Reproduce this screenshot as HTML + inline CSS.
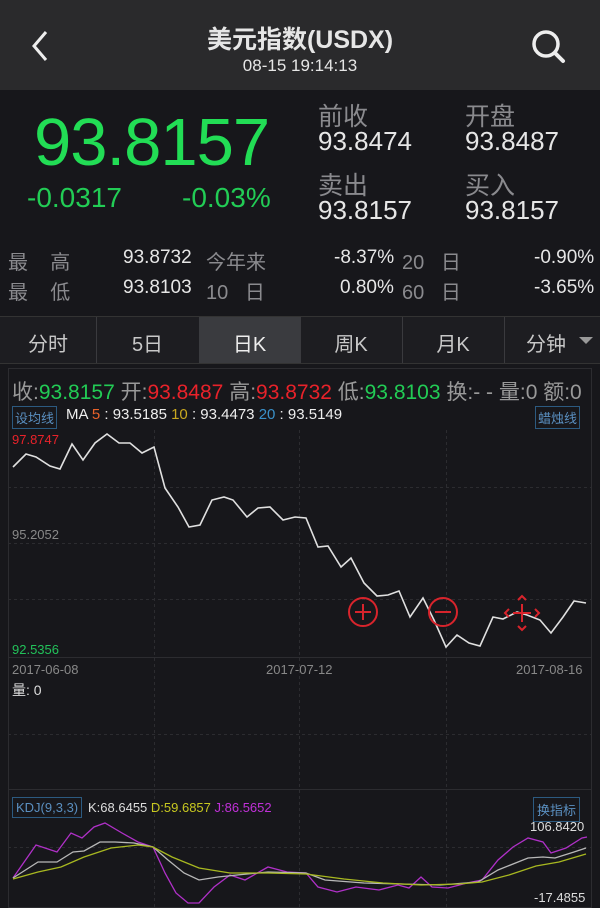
<!DOCTYPE html>
<html><head><meta charset="utf-8"><style>
*{margin:0;padding:0;box-sizing:border-box}
body{width:600px;height:908px;background:#17171b;font-family:"Liberation Sans","Noto Sans CJK SC",sans-serif;position:relative;overflow:hidden;color:#ddd}
.a{position:absolute;white-space:nowrap}
.g{color:#22cc55}.r{color:#e8222a}.gr{color:#8a8a8e}.w{color:#e6e6e6}
</style></head><body>
<div class="a" style="left:0;top:0;width:600px;height:90px;background:#2a2a2c"></div>
<svg class="a" style="left:28px;top:28px" width="24" height="36"><path d="M18 4 L6 18 L18 32" stroke="#eee" stroke-width="3" fill="none"/></svg>
<div class="a w" style="left:0;width:600px;text-align:center;top:20px;font-size:25px;font-weight:bold">美元指数(USDX)</div>
<div class="a w" style="left:0;width:600px;text-align:center;top:56px;font-size:17px">08-15 19:14:13</div>
<svg class="a" style="left:530px;top:28px" width="40" height="40"><circle cx="16" cy="16" r="12" stroke="#eee" stroke-width="3.5" fill="none"/><path d="M25 25 L33 33" stroke="#eee" stroke-width="4" stroke-linecap="round"/></svg>

<div class="a" style="left:34px;top:104px;font-size:67px;letter-spacing:-1px;color:#22dd55">93.8157</div>
<div class="a" style="left:27px;top:182px;font-size:28px;color:#22cc55">-0.0317</div>
<div class="a" style="left:182px;top:182px;font-size:28px;color:#22cc55">-0.03%</div>
<div class="a gr" style="left:318px;top:97px;font-size:25px">前收</div>
<div class="a w" style="left:318px;top:126px;font-size:26px">93.8474</div>
<div class="a gr" style="left:465px;top:97px;font-size:25px">开盘</div>
<div class="a w" style="left:465px;top:126px;font-size:26px">93.8487</div>
<div class="a gr" style="left:318px;top:166px;font-size:25px">卖出</div>
<div class="a w" style="left:318px;top:195px;font-size:26px">93.8157</div>
<div class="a gr" style="left:465px;top:166px;font-size:25px">买入</div>
<div class="a w" style="left:465px;top:195px;font-size:26px">93.8157</div>

<div class="a gr" style="left:8px;top:246px;font-size:20px">最&nbsp;&nbsp;&nbsp;&nbsp;高</div>
<div class="a w" style="left:123px;top:247px;font-size:19px">93.8732</div>
<div class="a gr" style="left:206px;top:246px;font-size:20px">今年来</div>
<div class="a w" style="left:334px;top:247px;font-size:19px">-8.37%</div>
<div class="a gr" style="left:402px;top:246px;font-size:20px">20&nbsp;&nbsp;&nbsp;日</div>
<div class="a w" style="left:534px;top:247px;font-size:19px">-0.90%</div>
<div class="a gr" style="left:8px;top:276px;font-size:20px">最&nbsp;&nbsp;&nbsp;&nbsp;低</div>
<div class="a w" style="left:123px;top:277px;font-size:19px">93.8103</div>
<div class="a gr" style="left:206px;top:276px;font-size:20px">10&nbsp;&nbsp;&nbsp;日</div>
<div class="a w" style="left:340px;top:277px;font-size:19px">0.80%</div>
<div class="a gr" style="left:402px;top:276px;font-size:20px">60&nbsp;&nbsp;&nbsp;日</div>
<div class="a w" style="left:534px;top:277px;font-size:19px">-3.65%</div>

<div class="a" style="left:0;top:316px;width:600px;height:48px;background:#1d1d21;border-top:1px solid #333;border-bottom:1px solid #333"></div>
<div class="a" style="left:199px;top:317px;width:101px;height:46px;background:#3a3b3f"></div>
<div class="a" style="left:96px;top:317px;width:1px;height:46px;background:#3a3a3e"></div>
<div class="a" style="left:402px;top:317px;width:1px;height:46px;background:#3a3a3e"></div>
<div class="a" style="left:504px;top:317px;width:1px;height:46px;background:#3a3a3e"></div>
<div class="a" style="left:300px;top:317px;width:1px;height:46px;background:#3a3a3e"></div>
<div class="a" style="left:0;width:96px;text-align:center;top:328px;font-size:20px;color:#c8c8c8">分时</div>
<div class="a" style="left:96px;width:103px;text-align:center;top:328px;font-size:20px;color:#c8c8c8">5日</div>
<div class="a" style="left:199px;width:101px;text-align:center;top:328px;font-size:20px;color:#eee">日K</div>
<div class="a" style="left:300px;width:102px;text-align:center;top:328px;font-size:20px;color:#c8c8c8">周K</div>
<div class="a" style="left:402px;width:102px;text-align:center;top:328px;font-size:20px;color:#c8c8c8">月K</div>
<div class="a" style="left:526px;top:328px;font-size:20px;color:#c8c8c8">分钟</div>
<svg class="a" style="left:578px;top:336px" width="16" height="10"><path d="M1 1 L15 1 L8 8Z" fill="#999"/></svg>

<div class="a" style="left:12px;top:376px;font-size:21px;color:#999">收:<span class="g">93.8157</span> 开:<span class="r">93.8487</span> 高:<span class="r">93.8732</span> 低:<span class="g">93.8103</span> 换:- - 量:0 额:0</div>
<div class="a" style="left:12px;top:406px;font-size:13px;color:#5a8fc0;border:1px solid #2c5a80;padding:1px 2px">设均线</div>
<div class="a" style="left:66px;top:406px;font-size:15px;color:#eee">MA <span style="color:#e8622a">5</span> : 93.5185 <span style="color:#c8a820">10</span> : 93.4473 <span style="color:#3a90c8">20</span> : 93.5149</div>
<div class="a" style="left:535px;top:406px;font-size:13px;color:#5a8fc0;border:1px solid #2c5a80;padding:1px 2px">蜡烛线</div>

<svg class="a" style="left:0;top:0" width="600" height="908">
<g stroke="#2c2c30" fill="none">
<rect x="8.5" y="368.5" width="583" height="539"/>
<line x1="8" y1="657.5" x2="592" y2="657.5"/>
<line x1="8" y1="789.5" x2="592" y2="789.5"/>
<g stroke-dasharray="3,3">
<line x1="8" y1="487.5" x2="592" y2="487.5"/><line x1="8" y1="543.5" x2="592" y2="543.5"/><line x1="8" y1="599.5" x2="592" y2="599.5"/>
<line x1="8" y1="734.5" x2="592" y2="734.5"/><line x1="8" y1="847.5" x2="592" y2="847.5"/>
<line x1="154.5" y1="430" x2="154.5" y2="908"/><line x1="299.5" y1="430" x2="299.5" y2="908"/><line x1="446.5" y1="430" x2="446.5" y2="908"/>
</g></g>
<polyline fill="none" stroke="#e0e0e0" stroke-width="1.6" points="13,467 26,454 36,457 50,466 60,469 72,444 83,460 95,443 107,434 119,443 130,443 142,453 154,447 165,488 178,507 189,527 200,525 212,500 224,497 233,500 247,517 258,508 270,507 283,520 295,517 306,518 318,547 328,546 341,567 351,558 364,583 377,596 388,595 399,591 410,617 423,598 434,620 446,647 457,635 469,643 480,646 493,617 503,619 517,612 527,615 540,620 551,633 563,617 574,601 586,603"/>
<g stroke="#d8242c" stroke-width="2" fill="none">
<circle cx="363" cy="612" r="14"/><path d="M355 612h16M363 604v16"/>
<circle cx="443" cy="612" r="14"/><path d="M435 612h16"/>
<path d="M522 604v18M513 613h18M518 600l4-4 4 4M518 626l4 4 4-4M509 609l-4 4 4 4M535 609l4 4-4 4"/>
</g>
<text x="12" y="444" font-size="13" fill="#e8222a" font-family="Liberation Sans">97.8747</text>
<text x="12" y="539" font-size="13" fill="#888" font-family="Liberation Sans">95.2052</text>
<text x="12" y="654" font-size="13" fill="#22c25a" font-family="Liberation Sans">92.5356</text>
<text x="12" y="674" font-size="13" fill="#888" font-family="Liberation Sans">2017-06-08</text>
<text x="266" y="674" font-size="13" fill="#888" font-family="Liberation Sans">2017-07-12</text>
<text x="516" y="674" font-size="13" fill="#888" font-family="Liberation Sans">2017-08-16</text>
<text x="12" y="695" font-size="14" fill="#ddd" font-family="Liberation Sans,Noto Sans CJK SC">量: 0</text>
<polyline fill="none" stroke="#b030c8" stroke-width="1.3" points="13,878 36,845 57,852 71,833 82,838 94,827 105,823 122,833 138,842 153,847 165,873 176,893 188,903 199,903 214,887 230,875 245,880 268,867 287,872 306,873 318,887 337,892 356,887 379,890 398,885 409,888 421,877 432,887 448,888 467,883 482,880 498,860 513,847 528,838 543,842 551,853 566,848 582,838 587,837"/>
<polyline fill="none" stroke="#b8b8b8" stroke-width="1.3" points="13,878 38,862 57,862 73,852 84,851 100,842 115,842 134,843 153,847 168,860 184,873 199,880 218,877 237,875 268,872 306,873 325,880 364,883 402,884 440,885 478,882 498,870 528,858 543,857 555,858 574,852 586,848"/>
<polyline fill="none" stroke="#a8b820" stroke-width="1.3" points="13,879 38,872 61,867 84,857 111,848 138,845 153,847 172,857 199,868 230,873 268,873 306,874 344,879 383,883 421,885 459,884 482,882 509,875 536,866 559,862 586,854"/>
</svg>
<div class="a" style="left:12px;top:797px;font-size:13px;color:#5a8fc0;border:1px solid #2c5a80;padding:2px 3px">KDJ(9,3,3)</div>
<div class="a" style="left:88px;top:800px;font-size:13px;color:#ddd">K:68.6455 <span style="color:#c8c820">D:59.6857</span> <span style="color:#c030d8">J:86.5652</span></div>
<div class="a" style="left:533px;top:797px;font-size:13px;color:#5a8fc0;border:1px solid #2c5a80;padding:2px 3px">换指标</div>
<div class="a" style="left:530px;top:819px;font-size:13px;color:#ddd">106.8420</div>
<div class="a" style="left:534px;top:890px;font-size:13px;color:#ddd">-17.4855</div>
</body></html>
